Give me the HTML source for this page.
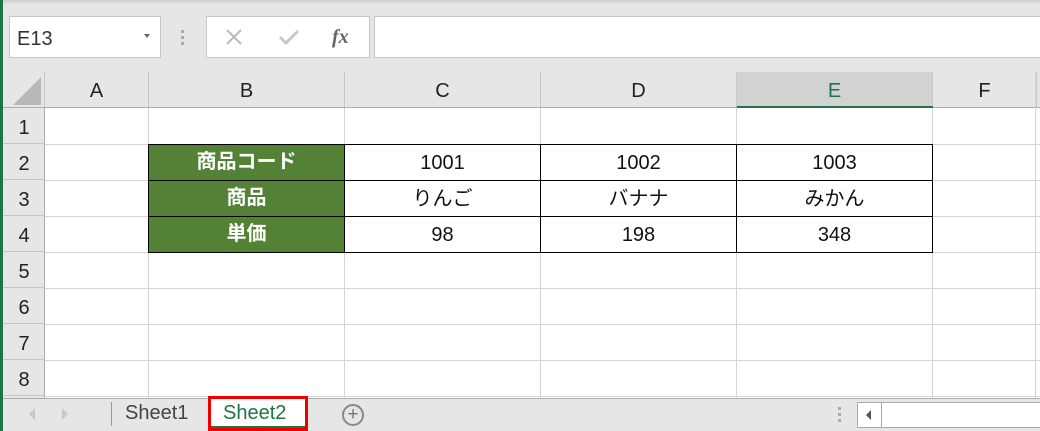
<!DOCTYPE html>
<html><head><meta charset="utf-8"><style>
*{margin:0;padding:0;box-sizing:border-box}
body{width:1040px;height:431px;overflow:hidden;background:#e6e6e6;position:relative;font-family:"Liberation Sans","Noto Sans CJK JP",sans-serif}
.a{position:absolute}
.vl{position:absolute;width:1px;background:#d4d4d4}
.hl{position:absolute;height:1px;background:#d4d4d4}
.ch{position:absolute;top:72px;height:36px;line-height:38px;text-align:center;font-size:20px;color:#222;border-right:1px solid #c6c6c6}
.rh{position:absolute;left:3px;width:42px;height:36px;line-height:40px;text-align:center;font-size:20px;color:#222;border-bottom:1px solid #c6c6c6}
.c{position:absolute;height:36px;line-height:38px;text-align:center;font-size:20px;color:#111}
.g{background:#538135;color:#fff;font-weight:bold}
</style></head><body>
<div class="a" style="left:0;top:0;width:3px;height:431px;background:#217346"></div>
<div class="a" style="left:3px;top:0;width:1037px;height:5px;background:linear-gradient(#d0d0d0,#e6e6e6)"></div>
<div class="a" style="left:9px;top:16px;width:152px;height:42px;background:#fff;border:1px solid #c6c6c6"></div>
<div class="a" style="left:17px;top:28px;font-size:20px;color:#333">E13</div>
<div class="a" style="left:144px;top:34px;width:0;height:0;border-left:3px solid transparent;border-right:3px solid transparent;border-top:4px solid #666"></div>
<div class="a" style="left:181px;top:30px;width:3px;height:3px;background:#aaa;box-shadow:0 6px 0 #aaa,0 12px 0 #aaa"></div>
<div class="a" style="left:206px;top:16px;width:164px;height:42px;background:#fff;border:1px solid #c6c6c6"></div>
<svg class="a" style="left:224px;top:28px" width="20" height="18"><path d="M3 2L17 16M17 2L3 16" stroke="#bbb" stroke-width="2"/></svg>
<svg class="a" style="left:278px;top:28px" width="22" height="18"><path d="M2 9L8 15L20 3" stroke="#c8c8c8" stroke-width="3" fill="none"/></svg>
<div class="a" style="left:332px;top:26px;font-family:'Liberation Serif',serif;font-style:italic;font-weight:bold;font-size:20px;color:#666">fx</div>
<div class="a" style="left:374px;top:16px;width:670px;height:42px;background:#fff;border:1px solid #c6c6c6"></div>
<div class="a" style="left:3px;top:72px;width:42px;height:36px;border-right:1px solid #c6c6c6"></div>
<svg class="a" style="left:13px;top:77px" width="29" height="29"><path d="M28 0L28 28L0 28Z" fill="#b8b8b8"/></svg>
<div class="ch" style="left:45px;width:104px">A</div>
<div class="ch" style="left:149px;width:196px">B</div>
<div class="ch" style="left:345px;width:196px">C</div>
<div class="ch" style="left:541px;width:196px">D</div>
<div class="ch" style="left:737px;width:196px;background:#d2d2d2;color:#217346">E</div>
<div class="ch" style="left:933px;width:104px">F</div>
<div class="a" style="left:3px;top:107px;width:1037px;height:1px;background:#ababab"></div>
<div class="a" style="left:737px;top:106px;width:196px;height:2px;background:#217346"></div>
<div class="a" style="left:45px;top:108px;width:995px;height:291px;background:#fff"></div>
<div class="vl" style="left:148px;top:108px;height:291px"></div>
<div class="vl" style="left:344px;top:108px;height:291px"></div>
<div class="vl" style="left:540px;top:108px;height:291px"></div>
<div class="vl" style="left:736px;top:108px;height:291px"></div>
<div class="vl" style="left:932px;top:108px;height:291px"></div>
<div class="vl" style="left:1035px;top:72px;height:327px"></div>
<div class="hl" style="left:45px;top:144px;width:995px"></div>
<div class="hl" style="left:45px;top:180px;width:995px"></div>
<div class="hl" style="left:45px;top:216px;width:995px"></div>
<div class="hl" style="left:45px;top:252px;width:995px"></div>
<div class="hl" style="left:45px;top:288px;width:995px"></div>
<div class="hl" style="left:45px;top:324px;width:995px"></div>
<div class="hl" style="left:45px;top:360px;width:995px"></div>
<div class="hl" style="left:45px;top:396px;width:995px"></div>
<div class="a" style="left:44px;top:108px;width:1px;height:291px;background:#ababab"></div>
<div class="rh" style="top:108px">1</div>
<div class="rh" style="top:144px">2</div>
<div class="rh" style="top:180px">3</div>
<div class="rh" style="top:216px">4</div>
<div class="rh" style="top:252px">5</div>
<div class="rh" style="top:288px">6</div>
<div class="rh" style="top:324px">7</div>
<div class="rh" style="top:360px">8</div>
<div class="a" style="left:148px;top:144px;width:785px;height:109px;background:#fff;border:1px solid #000"></div>
<div class="c g" style="left:149px;top:145px;width:195px;height:35px;line-height:35px">商品コード</div>
<div class="c g" style="left:149px;top:181px;width:195px;height:35px;line-height:35px">商品</div>
<div class="c g" style="left:149px;top:217px;width:195px;height:35px;line-height:35px">単価</div>
<div class="a" style="left:148px;top:180px;width:785px;height:1px;background:#000"></div>
<div class="a" style="left:148px;top:216px;width:785px;height:1px;background:#000"></div>
<div class="a" style="left:344px;top:144px;width:1px;height:109px;background:#000"></div>
<div class="a" style="left:540px;top:144px;width:1px;height:109px;background:#000"></div>
<div class="a" style="left:736px;top:144px;width:1px;height:109px;background:#000"></div>
<div class="c" style="left:345px;top:144px;width:195px">1001</div>
<div class="c" style="left:541px;top:144px;width:195px">1002</div>
<div class="c" style="left:737px;top:144px;width:195px">1003</div>
<div class="c" style="left:345px;top:180px;width:195px">りんご</div>
<div class="c" style="left:541px;top:180px;width:195px">バナナ</div>
<div class="c" style="left:737px;top:180px;width:195px">みかん</div>
<div class="c" style="left:345px;top:216px;width:195px">98</div>
<div class="c" style="left:541px;top:216px;width:195px">198</div>
<div class="c" style="left:737px;top:216px;width:195px">348</div>
<div class="a" style="left:3px;top:398px;width:1037px;height:33px;background:#e6e6e6;border-top:1px solid #ababab"></div>
<div class="a" style="left:29px;top:408px;width:0;height:0;border-top:6px solid transparent;border-bottom:6px solid transparent;border-right:6px solid #c8c8c8"></div>
<div class="a" style="left:62px;top:408px;width:0;height:0;border-top:6px solid transparent;border-bottom:6px solid transparent;border-left:6px solid #c8c8c8"></div>
<div class="a" style="left:111px;top:402px;width:1px;height:24px;background:#999"></div>
<div class="a" style="left:125px;top:402px;font-size:20px;color:#444">Sheet1</div>
<div class="a" style="left:208px;top:396px;width:100px;height:35px;background:#fff;border:3px solid #e00"></div>
<div class="a" style="left:211px;top:426px;width:94px;height:2px;background:#217346"></div>
<div class="a" style="left:223px;top:402px;font-size:20px;color:#217346">Sheet2</div>
<div class="a" style="left:342px;top:404px;width:22px;height:22px;border:2px solid #888;border-radius:50%;text-align:center;line-height:18px;font-size:19px;color:#777">+</div>
<div class="a" style="left:838px;top:407px;width:3px;height:3px;background:#aaa;box-shadow:0 6px 0 #aaa,0 12px 0 #aaa"></div>
<div class="a" style="left:857px;top:402px;width:190px;height:26px;background:#fff;border:1px solid #aaa"></div>
<div class="a" style="left:881px;top:402px;width:1px;height:26px;background:#aaa"></div>
<div class="a" style="left:866px;top:410px;width:0;height:0;border-top:5px solid transparent;border-bottom:5px solid transparent;border-right:5px solid #555"></div>
</body></html>
